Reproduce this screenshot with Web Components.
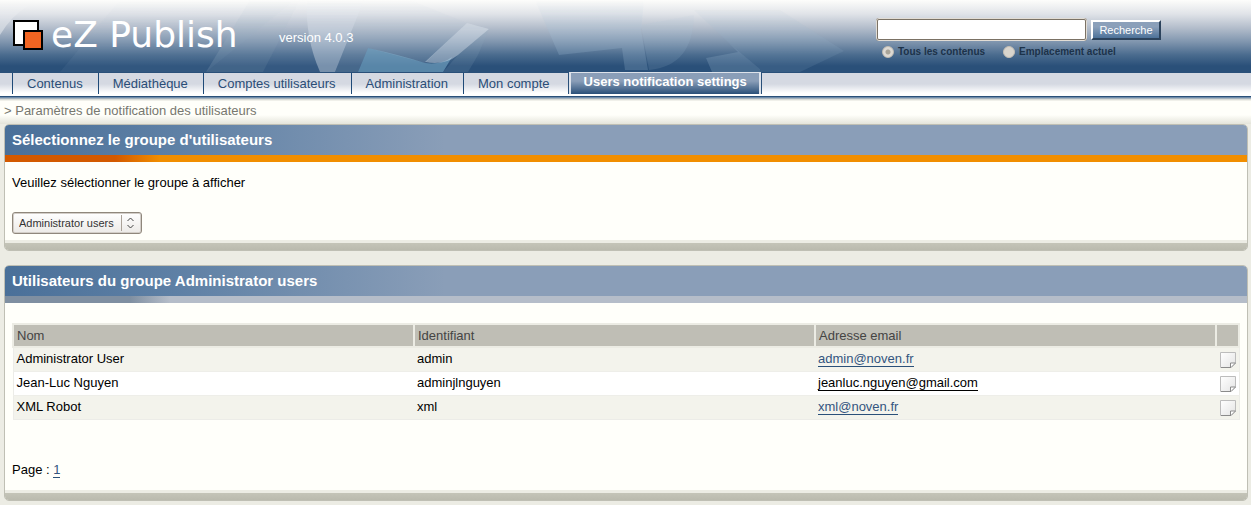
<!DOCTYPE html>
<html lang="fr">
<head>
<meta charset="utf-8">
<title>eZ Publish - Users notification settings</title>
<style>
body{margin:0;background:#ecece4;font:13px/16px "Liberation Sans",Arial,sans-serif;color:#000}
main{padding:0 3px 0 4px;display:grid;gap:14px}
</style>
</head>
<body>
<admin-header></admin-header>
<admin-tabs></admin-tabs>
<admin-path>Paramètres de notification des utilisateurs</admin-path>
<main>
<admin-panel accent="orange"><span slot="title">Sélectionnez le groupe d'utilisateurs</span><group-picker></group-picker></admin-panel>
<admin-panel><span slot="title">Utilisateurs du groupe Administrator users</span><user-table></user-table><page-nav></page-nav></admin-panel>
</main>
<script>
const define=(name,html)=>customElements.define(name,class extends HTMLElement{
  constructor(){super();this.attachShadow({mode:'open'}).innerHTML=html}
});

define('ez-logo',`<style>
:host{display:flex;align-items:center;gap:8px;color:#fff}
svg{display:block}
span{font:36px/36px "DejaVu Sans",sans-serif;white-space:nowrap}
</style>
<svg width="30" height="30" aria-hidden="true"><rect x="1" y="1" width="24" height="24" fill="#fff" stroke="#000" stroke-width="2"/><rect x="11" y="11" width="18" height="18" fill="#f26522" stroke="#000" stroke-width="2"/></svg>
<span>eZ Publish</span>`);

define('search-form',`<style>
:host{display:block;width:285px}
form{display:grid;gap:5px}
.row{display:flex;align-items:center;gap:4px}
input[type=text]{box-sizing:border-box;width:211px;height:23px;margin:0;padding:2px 4px;border:2px solid #7b7265;border-radius:3px;outline:1px solid #e2ddd5;outline-offset:-1px;background:#fff;font:13px "Liberation Sans",sans-serif}
button{box-sizing:border-box;width:70px;height:20px;padding:0;border:2px solid;border-color:#fff #2c435c #2c435c #fff;background:linear-gradient(#8ba0ba 30%,#4d7299);color:#fff;font:11px/16px "Liberation Sans",sans-serif}
.opts{display:flex;gap:18px;padding-left:6px}
label{display:flex;align-items:center;gap:4px;font:bold 10px/12px "Liberation Sans",sans-serif;color:#1c3249}
input[type=radio]{appearance:none;box-sizing:border-box;width:12px;height:12px;margin:0;border-radius:50%;border:1px solid #c4beb4;background:#d9d5cd}
input[type=radio]:checked{background:radial-gradient(circle,#a9a498 2px,#dedad3 3px)}
</style>
<form onsubmit="return false"><div class="row"><input type="text" aria-label="Recherche"><button>Recherche</button></div>
<div class="opts"><label><input type="radio" name="scope" checked>Tous les contenus</label><label><input type="radio" name="scope">Emplacement actuel</label></div></form>`);

define('admin-header',`<style>
:host{display:block;position:relative;overflow:hidden;background:linear-gradient(#fdfdfb 0,#e0e3e8 14px,#b3bdcb 28px,#7f95ae 42px,#4a6b8e 55px,#2a5079 66px,#2a5079)}
.art{position:absolute;left:0;top:0;-webkit-mask-image:linear-gradient(transparent,#000 30px);mask-image:linear-gradient(transparent,#000 30px)}
.bar{position:relative;display:grid;grid-template-columns:266px 1fr 375px;height:72px;box-sizing:border-box;padding-left:13px}
ez-logo{height:70px}
.v{color:#fff;padding-top:30px}
search-form{padding-top:18px}
</style>
<svg class="art" width="850" height="72" viewBox="0 0 850 72" aria-hidden="true">
<path d="M0 35Q12 15 28 6L18 0H0Z" fill="#fff" opacity=".4"/>
<path d="M60 72L120 0H295L206 72Z" fill="#9fb5ca" opacity=".08"/>
<path d="M206 72L250 0H300L263 72Z" fill="#9fb5ca" opacity=".2"/>
<path d="M263 72L300 0H307Q305 38 320 72Z" fill="#9fb5ca" opacity=".1"/>
<path d="M307 0Q305 38 320 72H335L364 0Z" fill="#d6e1eb" opacity=".45"/>
<path d="M358 72L368 48Q400 55 425 63Q442 65 452 57L443 72Z" fill="#78aac8" opacity=".6"/>
<path d="M335 72L364 0H410L467 23L425 63L368 48L358 72Z" fill="#b9cad8" opacity=".2"/>
<path d="M425 62L467 23L489 29L458 55Q444 66 425 62Z" fill="#e6eef4" opacity=".4"/>
<path d="M458 55L489 29L478 55L468 72H443Z" fill="#93aec5" opacity=".15"/>
<path d="M535 0L559 55L622 48L625 70H648L641 30L644 0Z" fill="#a9c5dc" opacity=".22"/>
<path d="M641 25L649 70Q693 66 694 15Z" fill="#a9c5dc" opacity=".14"/>
<path d="M706 58L738 52L729 43L760 69V72H712Z" fill="#9bb8d0" opacity=".25"/>
<path d="M729 43L694 10H780L844 51L800 72H760V69Z" fill="#9bb8d0" opacity=".13"/>
</svg>
<div class="bar"><ez-logo></ez-logo><span class="v">version 4.0.3</span><search-form></search-form></div>`);

define('admin-tabs',`<style>
:host{display:block;border-top:1px solid #2a5079;background:linear-gradient(#d5d9e2 11px,#fff 20px)}
nav{display:flex;padding-left:12px;height:23px}
a{box-sizing:border-box;height:21px;padding:0 15px 0 14px;border-left:1px solid #1f4a78;color:#2a4d77;text-decoration:none;line-height:21px;white-space:nowrap}
a.on{height:23px;margin:-2px 0 0 4px;padding:0 12px 0 13px;border:2px solid #dde2ea;border-bottom:0;box-shadow:-1px 0 #2a5079,1px 0 #2a5079,0 -1px #2a5079;background:linear-gradient(#8a9eb8 8px,#2a5079 21px) padding-box;color:#fff;font-weight:bold;line-height:18px}
.rule{height:5px;background:linear-gradient(#2a5079 1px,#6f8cab 1px 2px,#a5b2bd 2px 3px,#dadcd8 3px 4px,#f0f0ea 4px)}
</style>
<nav><a href="#">Contenus</a><a href="#">Médiathèque</a><a href="#">Comptes utilisateurs</a><a href="#">Administration</a><a href="#">Mon compte</a><a class="on" href="#">Users notification settings</a></nav><div class="rule"></div>`);

define('admin-path',`<style>
:host{display:block;padding:2px 4px 5px;background:linear-gradient(#fffffa 14px,#e4e4da);color:#77776f}
</style>&gt; <slot></slot>`);

define('admin-panel',`<style>
:host{display:block;border:1px solid #bfbfb4;border-radius:5px;overflow:hidden;background:#fffffa;--line:linear-gradient(90deg,#7f8fa1 125px,#b5bdc9 165px)}
:host([accent=orange]){--line:linear-gradient(90deg,#d35900 110px,#f18e00 155px)}
h2{margin:0;padding:0 7px;font:bold 15px/30px "Liberation Sans",sans-serif;color:#fff;background:linear-gradient(90deg,#4a7099,#5e80a5 170px,#8a9eb8 440px)}
.line{height:7px;background:var(--line)}
.body{padding:0 7px}
.foot{height:7px;border-top:3px solid #ecece4;background:linear-gradient(#c4c4b8,#babaae) padding-box}
</style>
<h2><slot name="title"></slot></h2><div class="line"></div><div class="body"><slot></slot></div><div class="foot"></div>`);

define('group-picker',`<style>
:host{display:grid;gap:21px;padding:13px 0 6px;justify-items:start}
.pick{position:relative}
select{appearance:none;display:block;box-sizing:border-box;width:130px;height:22px;margin:0;padding:0 6px;border:1px solid #8f877c;border-radius:3px;box-shadow:inset 0 0 0 1px #d3cec8;background:linear-gradient(#fff,#eceae7);font:11px "Liberation Sans",sans-serif;color:#333}
svg{position:absolute;right:5px;top:3px;pointer-events:none}
</style>
<label for="g">Veuillez sélectionner le groupe à afficher</label>
<div class="pick"><select id="g"><option>Administrator users</option></select><svg width="16" height="16" fill="none"><path d="M.5 0V16" stroke="#aaa298"/><path d="M6.500 6L9.500 3L12.500 6M6.500 10L9.500 13L12.500 10" stroke="#444"/></svg></div>`);

define('page-icon',`<style>:host{display:block}svg{display:block}</style>
<svg width="16" height="16" aria-hidden="true"><defs><linearGradient id="p" x2="1" y2="1"><stop stop-color="#fff"/><stop offset=".7" stop-color="#ececec"/><stop offset="1" stop-color="#ddd"/></linearGradient></defs>
<path d="M.5.5H15.500V11L11 15.500H.5Z" fill="url(#p)" stroke="#bcbcbc"/><path d="M1 15.500H11L15.500 11H10.500V15.500" fill="#fff" stroke="#8b8b8b"/></svg>`);

define('user-table',`<style>
:host{display:block;padding-top:20px}
table{width:100%;table-layout:fixed;border-collapse:collapse;border:1px solid #ecece8}
th{height:21px;padding:0 0 0 3px;border:2px solid #ecece4;background:#bfbeb5;text-align:left;font-weight:normal;color:#444}
td{height:23px;padding:0 0 0 3px;box-sizing:border-box;border-top:1px solid #eeeee9}
tbody tr{height:24px}
th:last-child{width:18px}
td:last-child{padding:2px 0 0}
tr:nth-child(odd) td{background:#f3f3ec}
tr:nth-child(even) td{background:#fff}
a{color:#33557f;text-decoration:none;border-bottom:1px solid #2a5079}
a.k{color:#000;border-color:#000}
page-icon{margin-left:4px}
</style>
<table><thead><tr><th>Nom</th><th>Identifiant</th><th>Adresse email</th><th></th></tr></thead><tbody>
<tr><td>Administrator User</td><td>admin</td><td><a href="mailto:admin@noven.fr">admin@noven.fr</a></td><td><page-icon></page-icon></td></tr>
<tr><td>Jean-Luc Nguyen</td><td>adminjlnguyen</td><td><a class="k" href="mailto:jeanluc.nguyen@gmail.com">jeanluc.nguyen@gmail.com</a></td><td><page-icon></page-icon></td></tr>
<tr><td>XML Robot</td><td>xml</td><td><a href="mailto:xml@noven.fr">xml@noven.fr</a></td><td><page-icon></page-icon></td></tr></tbody></table>`);

define('page-nav',`<style>
:host{display:block;padding:42px 0 12px}
a{color:#33557f;text-decoration:none;border-bottom:1px solid #2a5079}
</style>Page : <a href="#">1</a>`);
</script>
</body>
</html>
